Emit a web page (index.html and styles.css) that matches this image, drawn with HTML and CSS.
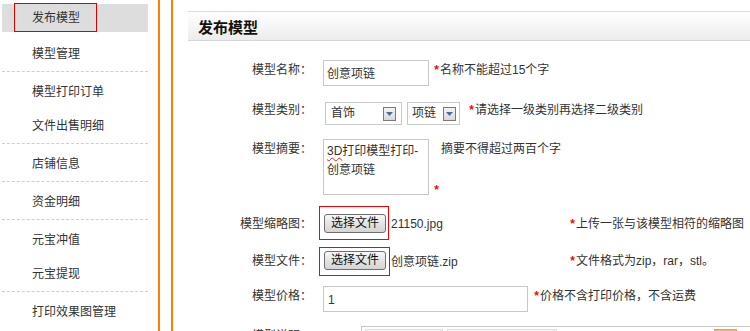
FILE: index.html
```html
<!DOCTYPE html>
<html lang="zh-CN">
<head>
<meta charset="utf-8">
<title>发布模型</title>
<link rel="stylesheet" href="styles.css">
</head>
<body>
<div class="page">
  <nav class="sidebar">
    <ul class="group">
      <li class="item active"><span class="mark">发布模型</span></li>
      <li class="item">模型管理</li>
    </ul>
    <ul class="group">
      <li class="item">模型打印订单</li>
      <li class="item">文件出售明细</li>
    </ul>
    <ul class="group">
      <li class="item">店铺信息</li>
    </ul>
    <ul class="group">
      <li class="item">资金明细</li>
    </ul>
    <ul class="group">
      <li class="item">元宝冲值</li>
      <li class="item">元宝提现</li>
    </ul>
    <ul class="group">
      <li class="item">打印效果图管理</li>
    </ul>
  </nav>
  <div class="divider"></div>
  <main class="main">
    <div class="title-bar"><h2>发布模型</h2></div>
    <div class="form">
      <div class="row r1">
        <span class="lbl">模型名称：</span>
        <div class="field name-field">创意项链</div>
        <span class="req">*</span><span class="hint">名称不能超过15个字</span>
      </div>
      <div class="row r2">
        <span class="lbl">模型类别：</span>
        <div class="select sel1"><span class="sel-text">首饰</span><span class="sel-btn"><svg width="7" height="4" viewBox="0 0 7 4"><path d="M0 0H7L3.5 4Z" fill="#4a6a9a"/></svg></span></div>
        <div class="select sel2"><span class="sel-text">项链</span><span class="sel-btn"><svg width="7" height="4" viewBox="0 0 7 4"><path d="M0 0H7L3.5 4Z" fill="#4a6a9a"/></svg></span></div>
        <span class="req req2">*</span><span class="hint">请选择一级类别再选择二级类别</span>
      </div>
      <div class="row r3">
        <span class="lbl">模型摘要：</span>
        <div class="area"><span class="typo">3D</span>打印模型打印-<br>创意项链</div>
        <span class="req req-bottom">*</span><span class="hint hint3">摘要不得超过两百个字</span>
      </div>
      <div class="row r4">
        <span class="lbl">模型缩略图：</span>
        <div class="file">
          <span class="btn"><span class="frame frame-a"></span>选择文件</span><span class="fname">21150.jpg</span>
        </div>
        <span class="req">*</span><span class="hint">上传一张与该模型相符的缩略图</span>
      </div>
      <div class="row r5">
        <span class="lbl">模型文件：</span>
        <div class="file">
          <span class="btn"><span class="frame frame-b"></span>选择文件</span><span class="fname">创意项链.zip</span>
        </div>
        <span class="req">*</span><span class="hint">文件格式为zip，rar，stl。</span>
      </div>
      <div class="row r6">
        <span class="lbl">模型价格：</span>
        <div class="field price-field">1</div>
        <span class="req req6">*</span><span class="hint">价格不含打印价格，不含运费</span>
      </div>
      <div class="row r7">
        <span class="lbl">模型说明：</span>
        <div class="editor">
          <div class="toolbar">
            <span class="tb tb1"></span>
            <span class="tb tb2"></span>
            <span class="tb-space"></span>
            <span class="tb tb-orange"></span>
          </div>
        </div>
      </div>
    </div>
  </main>
</div>
</body>
</html>
```
FILE: styles.css
```css
html, body {
  margin: 0;
  padding: 0;
  overflow: hidden;
  background: #fff;
}
body {
  font-family: "Liberation Sans", "Noto Sans CJK SC", sans-serif;
  font-size: 12px;
  color: #333;
}
.page {
  display: flex;
  align-items: stretch;
  min-height: 100vh;
}
.sidebar {
  width: 146px;
  margin-left: 2px;
  flex-shrink: 0;
}
.group {
  list-style: none;
  margin: 0;
  padding: 1px 0 2px;
  border-bottom: 1px dashed #cfcfcf;
}
.group:last-child {
  border-bottom: none;
}
.item {
  height: 34px;
  display: flex;
  align-items: center;
  padding-left: 30px;
  font-size: 12px;
  color: #333;
}
.item.active {
  height: 28px;
  margin: 3px 0;
  background: #dddddd;
  padding-left: 12px;
  align-items: flex-start;
}
.mark {
  display: inline-block;
  box-sizing: border-box;
  height: 29px;
  margin-top: -1px;
  border: 1px solid #e00000;
  padding: 0 16px 0 17px;
  line-height: 28px;
}
.divider {
  width: 11px;
  margin-left: 10px;
  border-left: 2px solid #ff8000;
  border-right: 2px solid #ff8000;
  flex-shrink: 0;
}
.main {
  flex: 1;
  min-width: 0;
}
.title-bar {
  margin: 11px 0 0 15px;
  height: 28px;
  border-top: 1px solid #dcdcdc;
  border-bottom: 1px solid #d6d6d6;
  background: linear-gradient(#ffffff, #ececec);
  display: flex;
  align-items: center;
  padding-left: 10px;
}
.title-bar h2 {
  margin: 0;
  font-size: 15px;
  font-weight: bold;
  color: #111;
}
.form {
  display: flex;
  flex-direction: column;
}
.row {
  display: flex;
  align-items: flex-start;
}
.lbl {
  width: 139px;
  margin-right: 11px;
  text-align: right;
  line-height: 20px;
  flex-shrink: 0;
  color: #333;
}
.r1 { margin-top: 19px; }
.r2 { margin-top: 14px; }
.r3 { margin-top: 14px; }
.r4 { margin-top: 19px; }
.r5 { margin-top: 17px; }
.r6 { margin-top: 15px; }
.r7 { margin-top: 14px; }

.field {
  box-sizing: border-box;
  height: 26px;
  border: 1px solid #c8c8c8;
  padding-left: 3px;
  line-height: 26px;
  color: #333;
}
.name-field { width: 106px; }
.price-field { width: 205px; padding-left: 4px; }

.req {
  display: inline-block;
  width: 7px;
  margin-left: 4px;
  color: #f00;
  line-height: 20px;
  font-weight: bold;
  text-align: center;
}
.req2 { margin-left: 8px; }
.req6 { margin-left: 5px; }
.hint {
  line-height: 20px;
  color: #333;
}

.select {
  box-sizing: border-box;
  height: 23px;
  margin-top: 2px;
  border: 1px solid #c9c9c9;
  display: flex;
  align-items: center;
  justify-content: space-between;
  background: #fff;
}
.sel1 { width: 77px; margin-left: 2px; }
.sel2 { width: 53px; margin-left: 5px; }
.sel-text {
  padding-left: 5px;
  line-height: 21px;
}
.sel2 .sel-text { padding-left: 4px; }
.sel-btn {
  box-sizing: border-box;
  width: 13px;
  height: 14px;
  margin-right: 5px;
  border: 1px solid #7a7a7a;
  background: linear-gradient(#f4f4f4, #d8d8d8);
  display: flex;
  align-items: center;
  justify-content: center;
}
.sel2 .sel-btn { margin-right: 3px; }

.area {
  box-sizing: border-box;
  width: 106px;
  height: 56px;
  border: 1px solid #c8c8c8;
  padding: 2px 3px;
  line-height: 19px;
  color: #333;
}
.typo {
  text-decoration: underline wavy #e02020;
  text-decoration-thickness: 1px;
  text-underline-offset: 2px;
}
.req-bottom {
  align-self: flex-end;
  line-height: 12px;
  margin-bottom: -1px;
}
.hint3 { margin-left: 1px; }

.file {
  width: 242px;
  display: flex;
  align-items: center;
  height: 19px;
}
.btn {
  position: relative;
  box-sizing: border-box;
  width: 62px;
  height: 19px;
  margin-left: 1px;
  border: 1px solid #707070;
  border-radius: 3px;
  background: linear-gradient(#f8f8f8, #e4e4e4 50%, #d4d4d4);
  text-align: center;
  line-height: 17px;
  color: #111;
}
.frame {
  position: absolute;
  border: 1px solid #ff0000;
  pointer-events: none;
}
.frame-a { left: -6px; top: -9px; right: -4px; bottom: -8px; }
.frame-b { left: -6px; top: -5px; right: -5px; bottom: -7px; }
.fname {
  margin-left: 5px;
  color: #333;
}

.editor {
  flex: 1;
  margin-left: 38px;
  height: 200px;
  border-top: 1px solid #c8c8c8;
  border-left: 1px solid #c8c8c8;
}
.toolbar {
  display: flex;
  align-items: flex-start;
  padding: 2px 13px 0 3px;
}
.tb {
  display: block;
  box-sizing: border-box;
  height: 22px;
  border: 1px solid #dedede;
  background: #f6f6f6;
}
.tb1 { width: 78px; }
.tb2 { width: 110px; margin-left: 4px; }
.tb-space { flex: 1; }
.tb-orange {
  width: 23px;
  border-color: #e8a050;
  background: #f3b36a;
}
```
